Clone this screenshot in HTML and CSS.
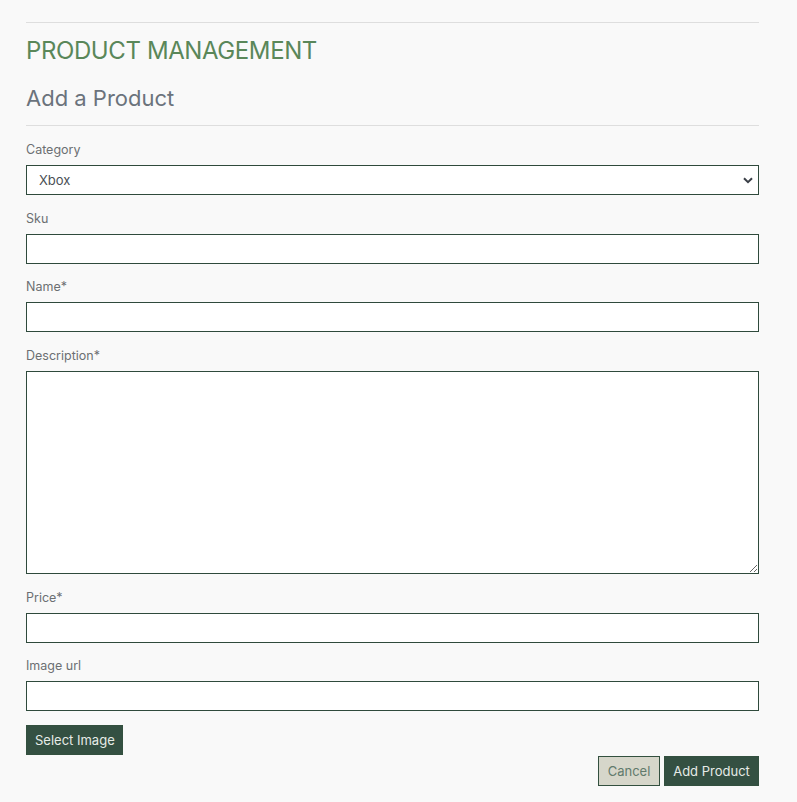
FILE: index.html
```html
<!DOCTYPE html>
<html>
<head>
<meta charset="utf-8">
<link rel="stylesheet" href="styles.css">
</head>
<body>
<div class="page">
  <hr class="rule">
  <h1 class="title">PRODUCT MANAGEMENT</h1>
  <h2 class="subtitle">Add a Product</h2>
  <hr class="rule rule-sub">
  <form class="form">
    <div class="group">
      <label class="label">Category</label>
      <div class="select-wrap">
        <div class="control select">Xbox</div>
        <svg class="chevron" width="10" height="7" viewBox="0 0 10 7"><path d="M1 1.2 L5 5.2 L9 1.2" fill="none" stroke="#3a3f47" stroke-width="2"/></svg>
      </div>
    </div>
    <div class="group">
      <label class="label">Sku</label>
      <input class="control" type="text">
    </div>
    <div class="group">
      <label class="label">Name*</label>
      <input class="control" type="text">
    </div>
    <div class="group">
      <label class="label">Description*</label>
      <textarea class="control area"></textarea>
    </div>
    <div class="group">
      <label class="label">Price*</label>
      <input class="control" type="text">
    </div>
    <div class="group">
      <label class="label">Image url</label>
      <input class="control" type="text">
    </div>
    <button type="button" class="btn btn-dark btn-select">Select Image</button>
    <div class="actions">
      <button type="button" class="btn btn-light">Cancel</button>
      <button type="button" class="btn btn-dark">Add Product</button>
    </div>
  </form>
</div>
</body>
</html>
```
FILE: styles.css
```css
html, body {
  margin: 0;
  padding: 0;
  background: #f9f9f9;
}
body {
  font-family: Inter, "Noto Sans", sans-serif;
  color: #6c6f72;
}
.page {
  width: 733px;
  margin-left: 26px;
  padding-top: 22px;
}
.rule {
  border: 0;
  border-top: 1px solid #dedede;
  margin: 0;
}
.title {
  margin: 13px 0 0 0;
  font-size: 24px;
  font-weight: 400;
  line-height: 30px;
  color: #5a8759;
  letter-spacing: -0.4px;
}
.subtitle {
  margin: 19px 0 0 0;
  font-size: 22px;
  font-weight: 400;
  line-height: 26px;
  color: #6b737c;
  letter-spacing: 0;
}
.rule-sub {
  margin-top: 14px;
}
.form {
  margin-top: 16px;
}
.group {
  margin-bottom: 15.7px;
}
.label {
  display: block;
  font-size: 12.5px;
  line-height: 16px;
  color: #6c6f72;
  margin-bottom: 7px;
}
.control {
  display: block;
  box-sizing: border-box;
  width: 100%;
  height: 30px;
  margin: 0;
  border: 1px solid #2f4a3c;
  border-radius: 0;
  background: #fff;
  font-family: inherit;
  font-size: 13px;
  outline: none;
}
.select-wrap {
  position: relative;
}
.select {
  padding-left: 12px;
  line-height: 28px;
  color: #4a4f55;
}
.chevron {
  position: absolute;
  right: 6px;
  top: 12px;
}
.area {
  height: 203px;
  resize: vertical;
}
.btn {
  font-family: inherit;
  font-size: 13px;
  height: 30px;
  padding: 0 8px;
  border: 1px solid #33503f;
  border-radius: 0;
  cursor: pointer;
  white-space: nowrap;
}
.btn-dark {
  background: #345042;
  color: #e6ebe7;
}
.btn-light {
  background: #d6d6ca;
  color: #617a6c;
}
.btn-select {
  margin-top: -2px;
  display: block;
  width: 97px;
}
.actions {
  display: flex;
  justify-content: flex-end;
  gap: 4px;
  margin-top: 1px;
}
.actions .btn-light {
  width: 62px;
}
.actions .btn-dark {
  width: 95px;
}
```
